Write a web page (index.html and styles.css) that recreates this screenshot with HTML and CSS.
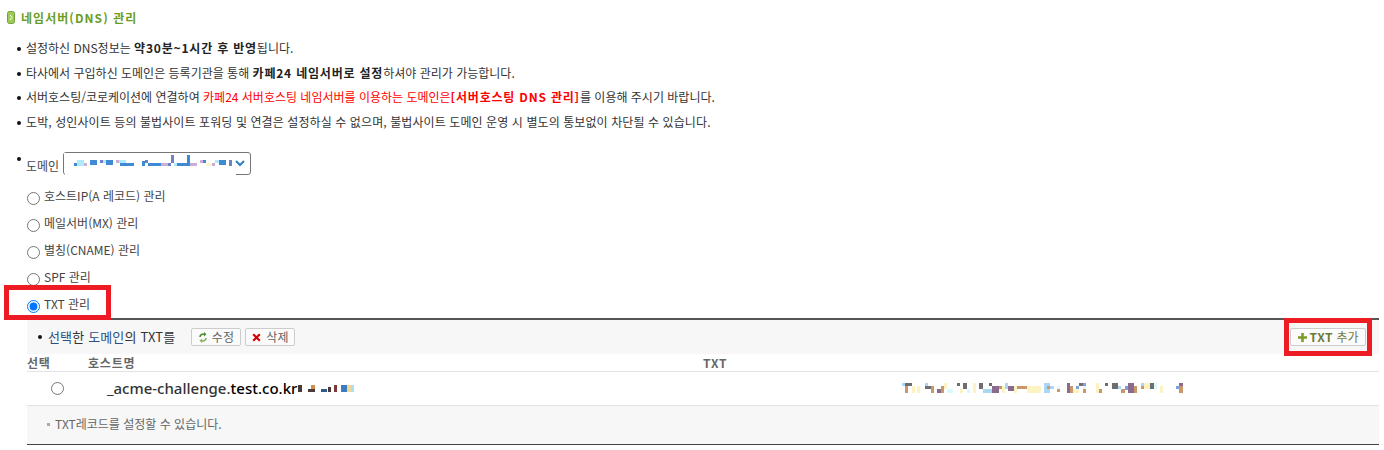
FILE: index.html
```html
<!DOCTYPE html>
<html lang="ko">
<head>
<meta charset="utf-8">
<title>네임서버(DNS) 관리</title>
<link rel="stylesheet" href="styles.css">
</head>
<body>
<div class="page">
  <h2 class="title"><svg class="title-icon" width="8" height="13" viewBox="0 0 8 13"><rect x="0.5" y="0.5" width="7" height="12" rx="2" fill="#9ccb5a" stroke="#6fa032"/><path d="M3 4l2 2.500-2 2.500" fill="none" stroke="#fff" stroke-width="1"/></svg>네임서버(DNS) 관리</h2>
  <ul class="notes">
    <li>설정하신 DNS정보는 <b>약30분~1시간 후 반영</b>됩니다.</li>
    <li>타사에서 구입하신 도메인은 등록기관을 통해 <b>카페24 네임서버로 설정</b>하셔야 관리가 가능합니다.</li>
    <li>서버호스팅/코로케이션에 연결하여 <span class="red">카페24 서버호스팅 네임서버를 이용하는 도메인은<b>[서버호스팅 DNS 관리]</b></span>를 이용해 주시기 바랍니다.</li>
    <li class="wide">도박, 성인사이트 등의 불법사이트 포워딩 및 연결은 설정하실 수 없으며, 불법사이트 도메인 운영 시 별도의 통보없이 차단될 수 있습니다.</li>
  </ul>
  <div class="domain">
    <span class="dot"></span>
    <label class="domain-label" for="dom">도메인</label>
    <div class="select-wrap">
      <select id="dom" class="select"><option></option></select>
      <svg class="mosaic-domain" width="188" height="23" viewBox="0 0 188 23" shape-rendering="crispEdges">
        <rect x="2" y="21" width="171" height="3" fill="#fff"/>
        <rect x="1" y="1" width="172" height="20" fill="#fff"/>
        <g fill="#3f8ad2"><rect x="11" y="11" width="3" height="3"/><rect x="27" y="8" width="7" height="5"/><rect x="43" y="8" width="7" height="5"/><rect x="57" y="11" width="14" height="3"/><rect x="79" y="9" width="3" height="5"/><rect x="85" y="11" width="13" height="3"/><rect x="114" y="11" width="10" height="3"/><rect x="124" y="3" width="3" height="11"/><rect x="140" y="8" width="3" height="3"/><rect x="156" y="8" width="7" height="5"/></g>
        <g fill="#aeeafa"><rect x="14" y="8" width="7" height="6"/><rect x="40" y="8" width="3" height="3"/><rect x="56" y="8" width="7" height="3"/><rect x="152" y="8" width="4" height="3"/><rect x="111" y="11" width="3" height="3"/></g>
        <g fill="#c9aed6"><rect x="21" y="11" width="3" height="3"/><rect x="53" y="8" width="3" height="3"/><rect x="98" y="11" width="7" height="3"/><rect x="127" y="11" width="7" height="3"/><rect x="137" y="8" width="3" height="3"/><rect x="149" y="11" width="3" height="3"/></g>
        <g fill="#6f80c6"><rect x="37" y="8" width="3" height="3"/><rect x="82" y="8" width="3" height="3"/><rect x="108" y="3" width="3" height="8"/><rect x="105" y="11" width="3" height="3"/><rect x="166" y="8" width="3" height="6"/></g>
        <rect x="143" y="11" width="6" height="3" fill="#fdf6c8"/>
      </svg>
      <svg class="chevron" width="10" height="7" viewBox="0 0 10 7"><path d="M1 1l4 4 4-4" fill="none" stroke="#2f7fc4" stroke-width="2"/></svg>
    </div>
  </div>
  <div class="radios">
    <label class="radio"><input type="radio" name="rec"><span>호스트IP(A 레코드) 관리</span></label>
    <label class="radio"><input type="radio" name="rec"><span>메일서버(MX) 관리</span></label>
    <label class="radio"><input type="radio" name="rec"><span>별칭(CNAME) 관리</span></label>
    <label class="radio"><input type="radio" name="rec"><span>SPF 관리</span></label>
    <label class="radio"><input type="radio" name="rec" checked><span>TXT 관리</span></label>
  </div>
  <section class="panel">
    <div class="toolbar">
      <span class="dot dot-tool"></span>
      <span class="tool-text"><span class="navy">선택</span>한 <span class="navy">도메인</span>의 TXT를</span>
      <button class="btn"><svg width="8" height="11" viewBox="0 0 8 11"><path d="M1 5a3 3 0 0 1 4.500-2.500" fill="none" stroke="#4f8f3a" stroke-width="1.800"/><path d="M5 0v4.500l2.500-2.200z" fill="#4f8f3a"/><path d="M7 6a3 3 0 0 1-4.500 2.500" fill="none" stroke="#8db86a" stroke-width="1.800"/><path d="M3 11V6.500L.5 8.700z" fill="#8db86a"/></svg>수정</button>
      <button class="btn"><svg width="9" height="9" viewBox="0 0 9 9"><path d="M1.200 1.200l6.600 6.600M7.800 1.200l-6.600 6.600" stroke="#d40000" stroke-width="2.200"/></svg>삭제</button>
      <button class="btn btn-add"><svg width="9" height="9" viewBox="0 0 9 9"><path d="M4.500 0v9M0 4.500h9" stroke="#7d9a2c" stroke-width="2.600"/></svg><span><b>TXT</b> 추가</span></button>
    </div>
    <div class="thead">
      <span class="c-sel">선택</span>
      <span class="c-host">호스트명</span>
      <span class="c-txt">TXT</span>
    </div>
    <div class="trow">
      <input class="row-radio" type="radio" name="row">
      <span class="host">_acme-challenge.<span class="host-dark">test.co.kr</span></span>
      <svg class="mosaic-host" width="56" height="12" viewBox="0 0 56 12" shape-rendering="crispEdges">
        <g fill="#4a3b38"><rect x="0" y="2" width="4" height="7"/><rect x="10" y="6" width="7" height="3"/><rect x="30" y="4" width="3" height="5"/></g>
        <rect x="13" y="2" width="4" height="4" fill="#c98f4e"/>
        <rect x="23" y="6" width="6" height="3" fill="#2d5b8c"/>
        <rect x="36" y="2" width="3" height="7" fill="#7a3a3a"/>
        <rect x="43" y="2" width="6" height="7" fill="#3a7ec0"/>
        <rect x="49" y="2" width="4" height="7" fill="#f1d79a"/>
        <rect x="53" y="2" width="3" height="7" fill="#a8e0f5"/>
      </svg>
      <svg class="mosaic-txt" width="287" height="10" viewBox="0 0 287 10" shape-rendering="crispEdges">
        <g fill="#a9d7f5"><rect x="1" y="0" width="3" height="3"/><rect x="24" y="0" width="3" height="3"/><rect x="82" y="6" width="9" height="4"/><rect x="104" y="0" width="3" height="6"/><rect x="143" y="0" width="6" height="10"/><rect x="149" y="3" width="4" height="3"/><rect x="214" y="3" width="6" height="3"/><rect x="240" y="0" width="3" height="3"/></g>
        <g fill="#c9986a"><rect x="4" y="3" width="3" height="7"/><rect x="30" y="3" width="3" height="7"/><rect x="40" y="3" width="3" height="7"/><rect x="98" y="3" width="3" height="3"/><rect x="116" y="3" width="10" height="3"/><rect x="146" y="3" width="3" height="3"/><rect x="156" y="6" width="3" height="3"/><rect x="169" y="3" width="3" height="7"/><rect x="182" y="6" width="3" height="4"/><rect x="198" y="6" width="3" height="4"/><rect x="220" y="6" width="4" height="4"/><rect x="233" y="3" width="3" height="7"/><rect x="240" y="3" width="3" height="3"/><rect x="278" y="3" width="4" height="7"/></g>
        <g fill="#fdf3c2"><rect x="11" y="3" width="3" height="7"/><rect x="16" y="3" width="3" height="7"/><rect x="43" y="0" width="3" height="6"/><rect x="59" y="6" width="3" height="4"/><rect x="72" y="0" width="3" height="10"/><rect x="101" y="3" width="3" height="7"/><rect x="113" y="3" width="3" height="7"/><rect x="126" y="3" width="14" height="7"/><rect x="172" y="6" width="6" height="4"/><rect x="195" y="0" width="3" height="10"/><rect x="243" y="0" width="6" height="6"/><rect x="259" y="3" width="3" height="7"/></g>
        <g fill="#6e6e6e"><rect x="4" y="0" width="7" height="3"/><rect x="24" y="3" width="6" height="3"/><rect x="56" y="0" width="3" height="3"/><rect x="62" y="0" width="4" height="6"/><rect x="78" y="0" width="4" height="6"/><rect x="88" y="0" width="3" height="3"/><rect x="178" y="0" width="4" height="3"/><rect x="204" y="0" width="3" height="3"/><rect x="211" y="0" width="6" height="6"/><rect x="249" y="0" width="4" height="6"/></g>
        <g fill="#8a6a8e"><rect x="36" y="6" width="4" height="4"/><rect x="91" y="3" width="7" height="7"/><rect x="107" y="3" width="6" height="5"/><rect x="166" y="0" width="3" height="10"/><rect x="227" y="0" width="6" height="10"/><rect x="278" y="0" width="4" height="3"/></g>
        <g fill="#7ba0dc"><rect x="175" y="3" width="3" height="3"/><rect x="182" y="0" width="3" height="3"/><rect x="224" y="3" width="3" height="4"/><rect x="275" y="3" width="3" height="3"/></g>
        <g fill="#d9fbfb"><rect x="46" y="6" width="6" height="4"/><rect x="66" y="6" width="3" height="4"/><rect x="182" y="3" width="3" height="3"/><rect x="156" y="3" width="3" height="3"/><rect x="253" y="0" width="3" height="6"/></g>
      </svg>
    </div>
    <div class="foot"><span class="square"></span>TXT레코드를 설정할 수 있습니다.</div>
  </section>
  <div class="mark mark-radio"></div>
  <div class="mark mark-add"></div>
</div>
</body>
</html>
```
FILE: styles.css
```css
* { box-sizing: border-box; }
html, body { margin: 0; padding: 0; background: #fff; }
body { font: 12px/16px "Noto Sans CJK KR", "Liberation Sans", sans-serif; color: #444; }
.page { position: relative; width: 1379px; height: 450px; overflow: hidden; padding-top: 9px; }
.title { display: flex; align-items: center; gap: 6px; height: 17px; margin: 0 0 0 7px; font-size: 12px; line-height: 17px; font-weight: 700; letter-spacing: 1.05px; color: #6a9d1f; }
.title-icon { flex: none; }
.notes { list-style: none; margin: 13px 0 0; padding: 0 0 0 26px; }
.notes li { position: relative; height: 24.6px; line-height: 18px; color: #333; }
.notes li::before { content: ""; position: absolute; left: -9px; top: 8px; width: 4px; height: 4px; border-radius: 50%; background: #111; }
.notes li.wide { letter-spacing: 0.09px; }
.notes b { color: #222; letter-spacing: 0.8px; }
.notes .red, .notes .red b { color: #f00; }
.domain { display: flex; align-items: center; height: 24px; margin: 14px 0 0 17px; }
.dot { flex: none; width: 4px; height: 4px; border-radius: 50%; background: #111; }
.domain .dot { align-self: flex-start; margin-top: 6px; }
.domain-label { margin: 5px 4px 0 5px; color: #444; }
.select-wrap { position: relative; width: 188px; height: 23px; }
.select { appearance: none; display: block; width: 100%; height: 100%; padding: 0; background: #fff; border: 1px solid #767676; border-radius: 3px; }
.mosaic-domain { position: absolute; left: 0; top: 0; }
.chevron { position: absolute; right: 6px; top: 8px; }
.radios { margin: 13px 0 0 27px; }
.radio { display: flex; align-items: flex-start; height: 26.8px; }
.radio input { flex: none; width: 13px; height: 13px; margin: 4px 4px 0 0; accent-color: #0075ff; }
.radio span { color: #444; line-height: 16px; margin-top: 0; }
.panel { margin: -4px 0 0 27px; border-top: 2px solid #555; border-bottom: 1px solid #444; }
.toolbar { display: flex; align-items: center; height: 34px; padding: 0 13px 0 11px; background: #f7f7f7; }
.dot-tool { margin-right: 6px; }
.tool-text { color: #333; font-size: 13px; letter-spacing: 0.15px; }
.navy { color: #2a4f86; }
.btn { display: inline-flex; align-items: center; justify-content: center; gap: 5px; width: 50px; height: 18px; margin-left: 4px; padding: 0; font: 12px/16px "Noto Sans CJK KR", "Liberation Sans", sans-serif; color: #666; background: #fbfbfb; border: 1px solid #ccc; border-radius: 2px; }
.tool-text + .btn { margin-left: 16px; }
.btn-add { width: 76px; margin-left: auto; gap: 3px; color: #6b7a3c; }
.btn-add b { font-weight: 700; letter-spacing: 0.5px; }
.thead { display: flex; align-items: center; height: 18px; border-bottom: 1px solid #e2e2e2; background: #fff; font-weight: 700; color: #666; letter-spacing: 0.8px; }
.c-sel { width: 61px; }
.c-host { width: 615px; }
.trow { display: flex; align-items: center; height: 34px; border-bottom: 1px solid #e2e2e2; background: #fff; }
.row-radio { flex: none; width: 13px; height: 13px; margin: 0 0 0 24px; }
.host { margin: -2px 0 0 43px; font: 500 15px/18px "Noto Sans", "Liberation Sans", sans-serif; color: #333; }
.host-dark { color: #000; }
.mosaic-host { margin-left: 1px; }
.mosaic-txt { margin: -2px 0 0 547px; }
.foot { display: flex; align-items: center; height: 38px; padding: 0 0 2px 20px; background: #f7f7f7; color: #666; font-size: 12px; }
.square { width: 3px; height: 3px; margin-right: 5px; background: #aaa; }
.mark { position: absolute; border: 5px solid #ed1c24; }
.mark-radio { left: 4px; top: 285px; width: 107px; height: 35px; }
.mark-add { left: 1284px; top: 318px; width: 88px; height: 38px; }
```
